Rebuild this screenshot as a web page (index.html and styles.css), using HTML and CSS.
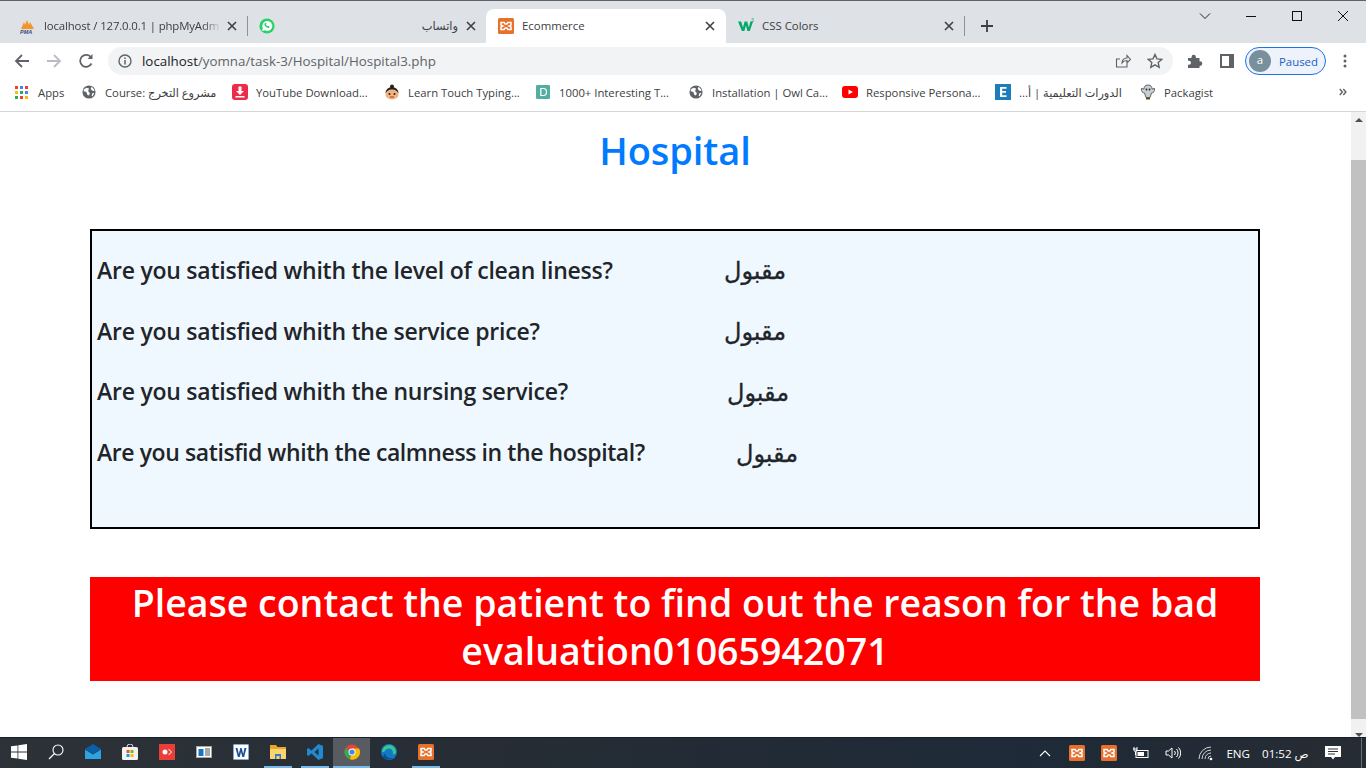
FILE: index.html
```html
<!DOCTYPE html>
<html lang="en">
<head>
    <meta charset="UTF-8">
    <meta name="viewport" content="width=device-width, initial-scale=1.0">
    <title>Ecommerce</title>
    <link rel="stylesheet" href="styles.css">
</head>
<body>
    <svg class="defs" width="0" height="0">
        <symbol id="xampp" viewBox="0 0 16 16">
            <rect width="16" height="16" rx="1.5" fill="#e8702a"/>
            <path d="M3 4.5h3.2l1 1.6h1.6l1-1.6H13v2.6l-2 .9 2 .9v2.6H9.8l-1-1.6H7.2l-1 1.6H3V8.9L5 8 3 7.1z" fill="none" stroke="#fff" stroke-width="1.5"/>
        </symbol>
        <symbol id="globe" viewBox="0 0 16 16">
            <circle cx="8" cy="8" r="7.5" fill="#5f6368"/>
            <path d="M2 5l3-2 3 1-1 3 2 2-1 3-2-1-1-3-3-1zM11 2l3 3v2l-3-1-1-2zM12 9l2 0-2 4-1-1z" fill="#fff"/>
        </symbol>
        <symbol id="close" viewBox="0 0 10 10">
            <path d="M1 1l8 8M9 1L1 9" stroke="#3c4043" stroke-width="1.6" fill="none"/>
        </symbol>
    </svg>

    <!-- tabs -->
    <div class="tabstrip">
        <div class="tab tab-first">
            <svg class="favicon" viewBox="0 0 16 16"><path d="M1 11l3-7 1 3 2-5 2 5 1-3 4 7z" fill="#f29727"/><text x="0" y="15.5" class="pma">PMA</text></svg>
            <span class="tab-title tab-fade">localhost / 127.0.0.1 | phpMyAdm</span>
            <svg class="tab-close"><use href="#close"/></svg>
        </div>
        <div class="tab-sep"></div>
        <div class="tab tab-second">
            <svg class="favicon" viewBox="0 0 16 16"><circle cx="8" cy="8" r="7.6" fill="#25d366"/><path d="M3 13l.8-2.8A5 5 0 1 1 5.8 12.3z" fill="#fff"/><path d="M6 5c-1 1-.6 2.3.6 3.6 1.3 1.3 2.8 1.8 3.7.8l.2-1-1.3-.7-.6.6c-.8-.3-1.3-.9-1.7-1.7l.6-.6L6.8 4.8z" fill="#25d366"/></svg>
            <span class="tab-title tab-rtl" dir="rtl">واتساب</span>
            <svg class="tab-close"><use href="#close"/></svg>
        </div>
        <div class="tab tab-active">
            <svg class="favicon"><use href="#xampp"/></svg>
            <span class="tab-title">Ecommerce</span>
            <svg class="tab-close"><use href="#close"/></svg>
        </div>
        <div class="tab tab-last">
            <svg class="favicon" viewBox="0 0 16 16"><path d="M0 3.5h3.2L5 9.5l1.6-6h2.6l1.6 6 1.6-6H15L11.8 13H9.4L7.9 7.5 6.4 13H3.9z" fill="#04aa6d"/><text x="13" y="4" class="w3">3</text></svg>
            <span class="tab-title">CSS Colors</span>
            <svg class="tab-close"><use href="#close"/></svg>
        </div>
        <div class="tab-sep tab-sep-last"></div>
        <svg class="newtab" viewBox="0 0 12 12"><path d="M6 0v12M0 6h12" stroke="#3c4043" stroke-width="1.8"/></svg>
        <div class="window-btns">
            <svg class="win-btn" viewBox="0 0 12 12"><path d="M1 3.5l5 5 5-5" fill="none" stroke="#222"/></svg>
            <svg class="win-btn" viewBox="0 0 12 12"><path d="M1 6.5h10" stroke="#111"/></svg>
            <svg class="win-btn" viewBox="0 0 12 12"><rect x="1.5" y="1.5" width="9" height="9" fill="none" stroke="#111"/></svg>
            <svg class="win-btn" viewBox="0 0 12 12"><path d="M1 1l10 10M11 1L1 11" stroke="#111"/></svg>
        </div>
    </div>

    <!-- address bar -->
    <div class="toolbar">
        <svg class="nav-icon" viewBox="0 0 16 16"><path d="M15 8H2M8 2L2 8l6 6" fill="none" stroke="#5f6368" stroke-width="1.8"/></svg>
        <svg class="nav-icon" viewBox="0 0 16 16"><path d="M1 8h13M8 2l6 6-6 6" fill="none" stroke="#b9bcc0" stroke-width="1.8"/></svg>
        <svg class="nav-icon" viewBox="0 0 16 16"><path d="M13.5 10.5A6 6 0 1 1 13 4.3" fill="none" stroke="#5f6368" stroke-width="1.8"/><path d="M14.5 1v5h-5z" fill="#5f6368"/></svg>
        <div class="omnibox">
            <svg class="info" viewBox="0 0 14 14"><circle cx="7" cy="7" r="6" fill="none" stroke="#5f6368" stroke-width="1.4"/><path d="M7 6v4.5M7 3.5V5" stroke="#5f6368" stroke-width="1.5"/></svg>
            <span class="url"><span class="url-host">localhost</span>/yomna/task-3/Hospital/Hospital3.php</span>
            <svg class="omni-share" viewBox="0 0 16 16"><path d="M12 9.5V14H1.5V6H5M7 10c0-3 2-5 5-5V2.5l3.5 4L12 10V7.5C9.5 7.5 8 8.500 7 10z" fill="none" stroke="#5f6368" stroke-width="1.1"/></svg>
            <svg class="omni-star" viewBox="0 0 16 16"><path d="M8 1.5l2 4.4 4.7.5-3.5 3.2 1 4.7L8 11.900l-4.200 2.400 1-4.700L1.300 6.400 6 5.900z" fill="none" stroke="#5f6368" stroke-width="1.4"/></svg>
        </div>
        <svg class="ext" viewBox="0 0 16 16"><path d="M1 5h3.500V4a2.200 2.200 0 0 1 4.400 0v1h3.600v3.300H13a2.300 2.300 0 0 1 0 4.600h-.5V15H1v-3.200h1a2 2 0 0 0 0-4H1z" fill="#5f6368"/></svg>
        <svg class="side" viewBox="0 0 14 14"><path d="M0 0h14v14H0zM2 2v10h7V2z" fill="#5f6368" fill-rule="evenodd"/></svg>
        <div class="profile"><span class="avatar">a</span><span class="paused">Paused</span></div>
        <svg class="menu-dots" viewBox="0 0 4 14"><circle cx="2" cy="2" r="1.5" fill="#5f6368"/><circle cx="2" cy="7" r="1.5" fill="#5f6368"/><circle cx="2" cy="12" r="1.5" fill="#5f6368"/></svg>
    </div>

    <!-- bookmarks -->
    <div class="bookmarks">
        <div class="bm">
            <svg class="bm-icon apps" viewBox="0 0 13 13"><g><rect width="3" height="3" fill="#ea4335"/><rect x="5" width="3" height="3" fill="#4285f4"/><rect x="10" width="3" height="3" fill="#ea4335"/><rect y="5" width="3" height="3" fill="#fbbc05"/><rect x="5" y="5" width="3" height="3" fill="#34a853"/><rect x="10" y="5" width="3" height="3" fill="#4285f4"/><rect y="10" width="3" height="3" fill="#34a853"/><rect x="5" y="10" width="3" height="3" fill="#ea4335"/><rect x="10" y="10" width="3" height="3" fill="#fbbc05"/></g></svg>
            <span>Apps</span>
        </div>
        <div class="bm"><svg class="bm-icon bm-small"><use href="#globe"/></svg><span>Course: مشروع التخرج</span></div>
        <div class="bm">
            <svg class="bm-icon" viewBox="0 0 16 16"><rect width="16" height="16" rx="3" fill="#ee2c4a"/><path d="M6.5 2.5h3V7H12L8 11 4 7h2.5zM3.5 12h9v1.500h-9z" fill="#fff"/></svg>
            <span>YouTube Download...</span>
        </div>
        <div class="bm">
            <svg class="bm-icon" viewBox="0 0 16 16"><circle cx="8" cy="2.5" r="2" fill="#222"/><path d="M1.5 9a6.500 6 0 0 1 13 0z" fill="#222"/><ellipse cx="8" cy="10.5" rx="6.5" ry="5" fill="#f3b17c"/><circle cx="5.5" cy="10" r="1" fill="#222"/><circle cx="10.5" cy="10" r="1" fill="#222"/><path d="M6 13h4" stroke="#a33" stroke-width="1"/></svg>
            <span>Learn Touch Typing...</span>
        </div>
        <div class="bm">
            <svg class="bm-icon bm-small" viewBox="0 0 16 16"><rect width="16" height="16" rx="1.5" fill="#52ae9f"/><path d="M5.5 4h3a3.500 4 0 0 1 0 8h-3z" fill="none" stroke="#fff" stroke-width="1.4"/></svg>
            <span>1000+ Interesting T...</span>
        </div>
        <div class="bm"><svg class="bm-icon bm-small"><use href="#globe"/></svg><span>Installation | Owl Ca...</span></div>
        <div class="bm">
            <svg class="bm-icon" viewBox="0 0 16 16"><rect y="2" width="16" height="12" rx="3" fill="#f00"/><path d="M6.5 5.5L11 8l-4.500 2.500z" fill="#fff"/></svg>
            <span>Responsive Persona...</span>
        </div>
        <div class="bm">
            <svg class="bm-icon" viewBox="0 0 16 16"><rect width="16" height="16" fill="#1d7dbb"/><path d="M5 3h6.500v1.800H7.200V7h3.800v1.800H7.200v2.400h4.300V13H5z" fill="#fff"/></svg>
            <span dir="rtl">الدورات التعليمية | أ...</span>
        </div>
        <div class="bm">
            <svg class="bm-icon" viewBox="0 0 16 16"><path d="M8 1C5 1 4 3 4 5L1.500 4.500C1 7 2.500 9 4.500 9L6 13.500h4L11.500 9C13.500 9 15 7 14.500 4.500L12 5c0-2-1-4-4-4z" fill="#c9ced1" stroke="#5c6266"/><circle cx="6.5" cy="5.5" r=".9" fill="#222"/><circle cx="9.5" cy="5.5" r=".9" fill="#222"/><path d="M6 13.500h4V15.500H6z" fill="#6b4a2b"/></svg>
            <span>Packagist</span>
        </div>
        <svg class="bm-more" viewBox="0 0 8 8"><path d="M.8 1l2.600 3L.8 7M4.300 1l2.600 3-2.600 3" fill="none" stroke="#5f6368" stroke-width="1.4"/></svg>
    </div>

    <!-- page -->
    <div class="viewport">
        <main class="page">
            <h1 class="title">Hospital</h1>
            <div class="answers">
                <div class="answer-row"><h4 class="question">Are you satisfied whith the level of clean liness?</h4><h4 class="answer" dir="rtl">مقبول</h4></div>
                <div class="answer-row"><h4 class="question">Are you satisfied whith the service price?</h4><h4 class="answer" dir="rtl">مقبول</h4></div>
                <div class="answer-row"><h4 class="question">Are you satisfied whith the nursing service?</h4><h4 class="answer answer-nudge" dir="rtl">مقبول</h4></div>
                <div class="answer-row"><h4 class="question question-tight">Are you satisfid whith the calmness in the hospital?</h4><h4 class="answer answer-far" dir="rtl">مقبول</h4></div>
            </div>
            <h1 class="warning">Please contact the patient to find out the reason for the bad evaluation01065942071</h1>
        </main>
        <div class="scrollbar">
            <svg class="scroll-arrow" viewBox="0 0 8 4"><path d="M0 4l4-4 4 4z" fill="#505050"/></svg>
            <div class="scroll-thumb"></div>
            <svg class="scroll-arrow" viewBox="0 0 8 4"><path d="M0 0l4 4 4-4z" fill="#505050"/></svg>
        </div>
    </div>

    <!-- windows taskbar -->
    <footer class="taskbar">
        <div class="task-cell"><svg class="task-icon" viewBox="0 0 16 16"><path d="M0 2.300l6.500-.9v6.200H0zM7.300 1.300L16 0v7.600H7.300zM0 8.400h6.500v6.200L0 13.700zM7.300 8.400H16V16l-8.700-1.300z" fill="#fff"/></svg></div>
        <div class="task-cell"><svg class="task-icon" viewBox="0 0 16 16"><circle cx="10" cy="6" r="5" fill="none" stroke="#fff" stroke-width="1.1"/><path d="M6.500 9.500L1 15" stroke="#fff" stroke-width="1.3"/></svg></div>
        <div class="task-cell"><svg class="task-icon" viewBox="0 0 16 16"><path d="M0 5l8-5 8 5v0L8 10 0 5z" fill="#0a5fa8"/><path d="M0 5.500l8 5 8-5V15H0z" fill="#2ea3e3"/></svg></div>
        <div class="task-cell"><svg class="task-icon" viewBox="0 0 16 16"><rect y="3" width="16" height="13" rx="1.5" fill="#f2f2f2"/><path d="M5 3a3 3 0 0 1 6 0" fill="none" stroke="#ddd"/><rect x="4.5" y="6" width="3" height="3" fill="#f25022"/><rect x="8.5" y="6" width="3" height="3" fill="#7fba00"/><rect x="4.5" y="10" width="3" height="3" fill="#00a4ef"/><rect x="8.5" y="10" width="3" height="3" fill="#ffb900"/></svg></div>
        <div class="task-cell"><svg class="task-icon" viewBox="0 0 16 16"><rect width="16" height="16" fill="#ea3e36"/><circle cx="6" cy="8" r="2.5" fill="#fff"/><path d="M9 5l3 3-3 3 1 0 3-3-3-3z" fill="#fff"/></svg></div>
        <div class="task-cell"><svg class="task-icon" viewBox="0 0 16 16"><rect y="2" width="16" height="12" fill="#a8a8a8"/><rect x="1" y="3" width="14" height="10" fill="#fff"/><rect x="2.5" y="5" width="5" height="7" fill="#1277c9"/><path d="M9 5h5M9 7h5M9 9h5M9 11h5" stroke="#555"/></svg></div>
        <div class="task-cell"><svg class="task-icon" viewBox="0 0 16 16"><rect width="16" height="16" fill="#fff" stroke="#1d4f9a"/><path d="M2.500 4h2l1.300 6 1.500-6h1.400l1.500 6L11.500 4h2l-2.400 9H9.300L8 8l-1.300 5H4.900z" fill="#1d4f9a"/></svg></div>
        <div class="task-cell task-open"><svg class="task-icon" viewBox="0 0 16 16"><path d="M0 1h6l1.500 2H16v12H0z" fill="#e8a92a"/><rect y="5" width="16" height="10" fill="#fbd46d"/><path d="M5 10h6v5H9.500v-3h-3v3H5z" fill="#2c7fc4"/></svg></div>
        <div class="task-cell task-open"><svg class="task-icon" viewBox="0 0 16 16"><path d="M11.500 0L16 2v12l-4.500 2L4.500 9.500 1.500 12 0 11V5l1.500-1 3 2.500zM11.500 4.500L7.500 8l4 3.500z" fill="#1f8ad2" fill-rule="evenodd"/></svg></div>
        <div class="task-cell task-open task-active"><svg class="task-icon" viewBox="0 0 16 16"><circle cx="8" cy="8" r="7.5" fill="#ea4335"/><path d="M8 8L1.500 4.200A7.500 7.500 0 0 0 6 15.300z" fill="#34a853"/><path d="M8 4.500h7A7.500 7.500 0 0 1 6 15.300L8 8z" fill="#fbbc05"/><circle cx="8" cy="8" r="3.5" fill="#fff"/><circle cx="8" cy="8" r="2.6" fill="#4285f4"/></svg></div>
        <div class="task-cell"><svg class="task-icon" viewBox="0 0 16 16"><circle cx="8" cy="8" r="8" fill="#1279c4"/><path d="M1 8a7 7 0 0 1 14 0c0 2-2 2.500-3.500 2.300C13 8 11 4.500 8 4.500 4.500 4.500 3.500 8 3 8z" fill="#38c78f"/><path d="M4 9c0 3 3 6 8 5-3 2.500-7 2-10-1 .5-1 1-3 2-4z" fill="#0c4f8f"/></svg></div>
        <div class="task-cell task-open"><svg class="task-icon"><use href="#xampp"/></svg></div>
        <div class="tray">
            <svg class="tray-caret" viewBox="0 0 12 7"><path d="M1 6l5-5 5 5" fill="none" stroke="#fff" stroke-width="1.1"/></svg>
            <svg class="tray-icon"><use href="#xampp"/></svg>
            <svg class="tray-icon"><use href="#xampp"/></svg>
            <svg class="tray-icon" viewBox="0 0 16 16"><path d="M0 4h4M1 2v3a1.500 1.500 0 0 0 3 0V2M2.500 7v3" stroke="#fff" fill="none"/><rect x="3" y="5.5" width="12" height="7" fill="none" stroke="#fff"/><rect x="4.5" y="7" width="6.5" height="4" fill="#fff"/></svg>
            <svg class="tray-icon tray-volume" viewBox="0 0 16 16"><path d="M1 6h2.500L7 3v10L3.500 10H1zM9.500 6a3 3 0 0 1 0 4M11.500 4a6 6 0 0 1 0 8M13.500 2.500a8 8 0 0 1 0 11" fill="none" stroke="#fff"/></svg>
            <svg class="tray-icon tray-wifi" viewBox="0 0 16 16"><path d="M1 14A12 12 0 0 1 13 2M4 14a9 9 0 0 1 9-9M7 14a6 6 0 0 1 6-6M10 14a3 3 0 0 1 3-3" fill="none" stroke="#cfd3d6"/><circle cx="13" cy="14" r="1.3" fill="#fff"/></svg>
            <span class="tray-lang">ENG</span>
            <span class="tray-clock">01:52 ص</span>
            <svg class="tray-note" viewBox="0 0 16 16"><path d="M0 1h16v11h-6l-2 2.500L6 12H0z" fill="#fff"/><path d="M3 4h10M3 6.500h10M3 9h7" stroke="#333"/></svg>
            <div class="show-desktop"></div>
        </div>
    </footer>
</body>
</html>
```

FILE: styles.css
```css
/* general */
* {
    box-sizing: border-box;
}
html, body {
    height: 100%;
}
body {
    margin: 0;
    display: flex;
    flex-direction: column;
    height: 768px;
    overflow: hidden;
    font-family: "Open Sans", "DejaVu Sans", sans-serif;
    background-color: #fff;
}
.defs {
    position: absolute;
}
svg {
    flex: none;
}

/* tabs */
.tabstrip {
    display: flex;
    align-items: flex-end;
    height: 43px;
    padding-left: 8px;
    background-color: #dee1e6;
    border-top: 1px solid #5f6368;
}
.tab {
    display: flex;
    align-items: center;
    height: 34px;
    padding: 0 9px 0 12px;
    font-size: 11.4px;
    color: #3c4043;
}
.tab-first {
    width: 237px;
    padding-right: 8px;
}
.tab-second {
    width: 235px;
    padding-left: 9px;
}
.tab-active {
    width: 240px;
    padding-right: 11px;
    background-color: #fff;
    border-radius: 8px 8px 0 0;
    margin-left: 1px;
}
.tab-last {
    width: 237px;
}
.tab-title {
    flex: 1;
    min-width: 0;
    margin: 0 0 2px 8px;
    white-space: nowrap;
}
.tab-fade {
    letter-spacing: -0.14px;
    -webkit-mask-image: linear-gradient(to right, #000 90%, transparent);
}
.tab-first .tab-close {
    margin-left: 6px;
}
.tab-rtl {
    text-align: right;
    padding-left: 8px;
}
.favicon {
    width: 16px;
    height: 16px;
}
.pma {
    font-family: "Liberation Sans", sans-serif;
    font-size: 5.5px;
    font-weight: 700;
    font-style: italic;
    fill: #33507c;
}
.w3 {
    font-family: "Liberation Sans", sans-serif;
    font-size: 5px;
    fill: #04aa6d;
}
.tab-close {
    width: 10px;
    height: 10px;
    margin-left: 8px;
}
.tab-sep {
    width: 1px;
    height: 20px;
    margin: 0 2px 7px;
    background-color: #8e9297;
}
.tab-sep-last {
    margin-left: 1px;
}
.newtab {
    width: 12px;
    height: 12px;
    margin: 0 0 11px 14px;
}
.window-btns {
    display: flex;
    align-self: flex-start;
    margin-left: auto;
}
.win-btn {
    width: 46px;
    height: 12px;
    margin-top: 9px;
}

/* address bar */
.toolbar {
    display: flex;
    align-items: center;
    height: 36px;
    padding-left: 14px;
    background-color: #fff;
}
.nav-icon {
    width: 16px;
    height: 16px;
    margin-right: 16px;
}
.omnibox {
    display: flex;
    align-items: center;
    width: 1065px;
    height: 28px;
    margin-left: -2px;
    padding: 0 10px;
    background-color: #f1f3f4;
    border-radius: 14px;
    font-size: 13.35px;
}
.info {
    width: 14px;
    height: 14px;
    margin-right: 10px;
}
.url {
    flex: 1;
    color: #5f6368;
    white-space: nowrap;
}
.url-host {
    color: #202124;
}
.omni-share {
    width: 16px;
    height: 16px;
    margin-right: 16px;
}
.omni-star {
    width: 16px;
    height: 16px;
}
.ext {
    width: 16px;
    height: 16px;
    margin-left: 14px;
}
.side {
    width: 14px;
    height: 14px;
    margin-left: 17px;
}
.profile {
    display: flex;
    align-items: center;
    width: 81px;
    height: 28px;
    margin-left: 11px;
    padding-left: 3px;
    background-color: #edf2fb;
    border: 1px solid #1a73e8;
    border-radius: 14px;
    font-size: 11.4px;
    color: #1a5fc4;
}
.avatar {
    width: 22px;
    height: 22px;
    margin-right: 8px;
    border-radius: 50%;
    background-color: #78909c;
    color: #fff;
    text-align: center;
    line-height: 20px;
}
.menu-dots {
    width: 4px;
    height: 14px;
    margin-left: 17px;
}

/* bookmarks */
.bookmarks {
    display: grid;
    grid-template-columns: 67px 150px 152px 152px 153px 153px 153px 145px 199px 14px;
    align-items: center;
    height: 33px;
    padding: 0 0 6px 15px;
    background-color: #fff;
    border-bottom: 1px solid #d5d7da;
    font-size: 11.3px;
    color: #3c4043;
}
.bm {
    display: flex;
    align-items: center;
    white-space: nowrap;
}
.bm-icon {
    width: 16px;
    height: 16px;
    margin-right: 8px;
}
.apps {
    width: 13px;
    height: 13px;
    margin-right: 10px;
}
.bm-small {
    width: 14px;
    height: 14px;
    margin-right: 9px;
}
.bm-more {
    width: 8px;
    height: 8px;
}

/* page */
.viewport {
    display: flex;
    flex: 1;
    min-height: 0;
}
.page {
    flex: 1;
    padding: 13px 91px 0 90px;
    color: #212529;
}
.title {
    margin: 0 0 53px;
    font-size: 38px;
    font-weight: 600;
    letter-spacing: -0.1px;
    line-height: 51px;
    text-align: center;
    color: #007bff;
}
.answers {
    height: 300px;
    padding: 9.5px 5px 0;
    background-color: #f0f8ff;
    border: 2px solid #000;
}
.answer-row {
    display: flex;
    align-items: center;
    height: 60.7px;
}
.question {
    width: 627px;
    margin: 0;
    font-size: 23px;
    font-weight: 600;
    letter-spacing: -0.24px;
    line-height: 1.2;
}
.question-tight {
    letter-spacing: -0.41px;
}
.answer {
    margin: 0;
    font-size: 24px;
    font-weight: 500;
    line-height: 1.2;
    -webkit-text-stroke: 0.3px #212529;
}
.answer-nudge {
    margin-left: 3px;
}
.answer-far {
    margin-left: 12px;
}
.warning {
    margin: 48px 0 0;
    padding: 2px 0 6px;
    font-size: 37.5px;
    font-weight: 600;
    line-height: 48px;
    text-align: center;
    color: #fff;
    background-color: #f00;
}
.scrollbar {
    display: flex;
    flex-direction: column;
    align-items: center;
    width: 15px;
    padding-top: 6px;
    background-color: #f1f1f1;
}
.scroll-arrow {
    width: 8px;
    height: 4px;
}
.scroll-thumb {
    flex: 1;
    width: 100%;
    margin: 38px 0 14px;
    background-color: #c1c1c1;
}

/* taskbar */
.taskbar {
    display: flex;
    align-items: stretch;
    height: 31px;
    background: linear-gradient(to right, #2c3238, #262d34 35%, #1e2a38 75%, #262c33);
    border-top: 1px solid #15202b;
}
.task-cell {
    display: flex;
    align-items: center;
    justify-content: center;
    width: 37px;
    padding-bottom: 2px;
}
.task-icon {
    width: 16px;
    height: 16px;
}
.task-open {
    background: linear-gradient(#76b9ed, #76b9ed) center bottom / 28px 2px no-repeat;
}
.task-active {
    background: linear-gradient(#76b9ed, #76b9ed) center bottom / 100% 2px no-repeat, #585c60;
}
.tray {
    display: flex;
    align-items: center;
    margin-left: auto;
    color: #fff;
    font-size: 11.6px;
}
.tray-caret {
    width: 12px;
    height: 7px;
    margin-right: 18px;
}
.tray-icon {
    width: 16px;
    height: 16px;
    margin-right: 16px;
}
.tray-volume {
    margin-right: 17px;
}
.tray-wifi {
    margin-right: 12px;
}
.tray-lang {
    margin-right: 12px;
}
.tray-clock {
    width: 49px;
    margin-right: 14px;
    white-space: nowrap;
}
.tray-note {
    width: 16px;
    height: 16px;
    margin-right: 20px;
}
.show-desktop {
    width: 1px;
    height: 100%;
    margin-right: 4px;
    background-color: #6a6f74;
}
```
